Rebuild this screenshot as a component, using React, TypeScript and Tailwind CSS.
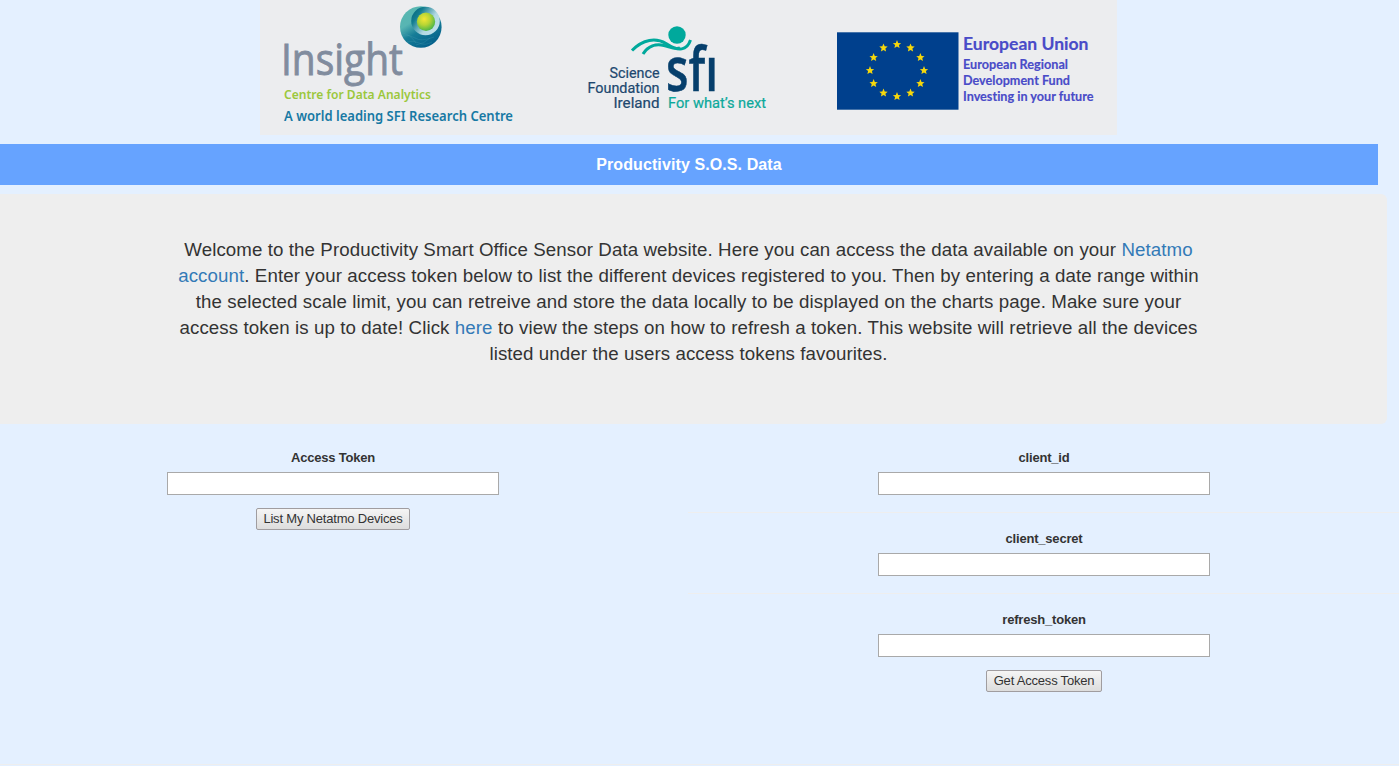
import React from "react";

const stars = Array.from({ length: 12 }, (_, i) => {
  const a = (i * Math.PI) / 6;
  const cx = 60 + 27 * Math.sin(a);
  const cy = 38.5 - 26 * Math.cos(a);
  return Array.from({ length: 10 }, (_, k) => {
    const r = k % 2 === 0 ? 4.4 : 2;
    const t = (k * Math.PI) / 5;
    return `${(cx + r * Math.sin(t)).toFixed(2)},${(cy - r * Math.cos(t)).toFixed(2)}`;
  }).join(" ");
});

function Logos() {
  return (
    <svg className="block h-[135px] w-[857px] bg-[#ecedef]" viewBox="260 0 857 135">
      <defs>
        <linearGradient id="shell" x1="0" y1="0" x2="0.6" y2="1">
          <stop offset="0" stopColor="#58b9b0" />
          <stop offset="0.4" stopColor="#58b5b3" />
          <stop offset="0.65" stopColor="#167d97" />
          <stop offset="1" stopColor="#05628c" />
        </linearGradient>
        <linearGradient id="cavity" x1="0" y1="0" x2="1" y2="0.7">
          <stop offset="0" stopColor="#005f7b" />
          <stop offset="0.3" stopColor="#147e91" />
          <stop offset="0.7" stopColor="#b4d9e3" />
          <stop offset="1" stopColor="#bfe0ea" />
        </linearGradient>
        <radialGradient id="core" cx="0.4" cy="0.35" r="0.65">
          <stop offset="0" stopColor="#f4e735" />
          <stop offset="0.5" stopColor="#b8d534" />
          <stop offset="1" stopColor="#4eb748" />
        </radialGradient>
      </defs>

      <text x="281" y="74.500" textLength="122" lengthAdjust="spacingAndGlyphs" fontFamily="'Open Sans', sans-serif" fontSize="43.500" fill="#818c9e" stroke="#818c9e" strokeWidth="0.9">Insight</text>
      <circle cx="420.8" cy="27" r="20.8" fill="url(#shell)" />
      <circle cx="425.5" cy="21" r="14.3" fill="url(#cavity)" />
      <circle cx="426" cy="21.8" r="9.2" fill="url(#core)" />
      <g fill="none" stroke="#4d9eb5" strokeWidth="0.5" opacity="0.5">
        <path d="M403 36q6-2 12 2t19-1M407 42q6-2 12 1t13-1M402 33q8 1 14 10M430 38q-6 6-14 7" />
      </g>
      <text x="284" y="99" textLength="147" lengthAdjust="spacingAndGlyphs" fontFamily="'Noto Sans', sans-serif" fontWeight="600" fontSize="12" fill="#9bc73c">Centre for Data Analytics</text>
      <text x="284" y="121" textLength="229" lengthAdjust="spacingAndGlyphs" fontFamily="'Noto Sans', sans-serif" fontWeight="600" fontSize="13.500" fill="#1779a4">A world leading SFI Research Centre</text>

      <circle cx="677" cy="35" r="8.7" fill="#00a99c" />
      <g fill="none" stroke="#00a99c" strokeWidth="3">
        <path d="M632 50.5C643 39 656 37.500 666 43.500C679 52 687 50.500 690.500 40" />
        <path d="M643 54C648 46 656 43.500 664 45.500C670 47 675 50 680 48" />
      </g>
      <g fontFamily="Roboto, sans-serif" fontSize="14" fill="#20476e" stroke="#20476e" strokeWidth="0.2">
        <text x="609.5" y="77.500" textLength="50" lengthAdjust="spacingAndGlyphs">Science</text>
        <text x="587.5" y="92.500" textLength="72" lengthAdjust="spacingAndGlyphs">Foundation</text>
        <text x="613.5" y="108" textLength="46" lengthAdjust="spacingAndGlyphs">Ireland</text>
      </g>
      <text x="666" y="91" textLength="52" lengthAdjust="spacingAndGlyphs" fontFamily="'Open Sans', sans-serif" fontWeight="600" fontSize="62" fill="#063f6c" stroke="#063f6c" strokeWidth="0.5">sfı</text>
      <text x="668" y="107.500" textLength="98" lengthAdjust="spacingAndGlyphs" fontFamily="Roboto, sans-serif" fontSize="14" fill="#0ca99b" stroke="#0ca99b" strokeWidth="0.2">For what’s next</text>

      <rect x="837" y="32.300" width="121.500" height="77.400" fill="#00408d" />
      <g transform="translate(837 32)" fill="#f5d70c">
        {stars.map((points) => <polygon key={points} points={points} />)}
      </g>
      <g fontFamily="Lato, sans-serif" fontWeight="700" fill="#494bc8" stroke="#494bc8" strokeWidth="0.15" style={{ fontVariantLigatures: "none" }}>
        <text x="963" y="50" textLength="125.500" lengthAdjust="spacingAndGlyphs" fontSize="16.500">European Union</text>
        <g fontSize="12.500">
          <text x="963" y="68.500" textLength="105" lengthAdjust="spacingAndGlyphs">European Regional</text>
          <text x="963" y="84.500" textLength="107" lengthAdjust="spacingAndGlyphs">Development Fund</text>
          <text x="963" y="101" textLength="130.500" lengthAdjust="spacingAndGlyphs">Investing in your future</text>
        </g>
      </g>
    </svg>
  );
}

function Field({ label }: { label: string }) {
  return (
    <label className="flex w-[332px] flex-col items-center text-[13px] leading-[18px] font-bold tracking-[-0.200px]">
      {label}
      <input className="mt-[5px] h-[23px] w-full border border-[#a9a9a9] bg-white px-1 font-normal" />
    </label>
  );
}

function Button({ children, className }: { children: React.ReactNode; className: string }) {
  return (
    <button className={`h-[22px] rounded-[2px] border border-[#a09da0] bg-linear-to-b from-[#f5f5f5] to-[#dddddd] text-[13px] leading-[18px] tracking-[-0.200px] whitespace-nowrap ${className}`}>
      {children}
    </button>
  );
}

export default function App() {
  return (
    <main className="h-[766px] overflow-hidden bg-[#e4f0ff] font-['Liberation_Sans',Arial,sans-serif] text-[#333333]">
      <header className="ml-[260px] w-[857px]"><Logos /></header>
      <h1 className="mt-[9px] h-[41px] w-[1378px] bg-[#66a3ff] text-center text-base leading-[41px] font-bold tracking-[0.100px] text-white">Productivity S.O.S. Data</h1>
      <section className="mt-[9px] h-[230px] w-[1387px] rounded-r-[6px] bg-[#eeeeee] pt-[43px]">
        <p className="ml-[138.500px] w-[1100px] text-center text-[18.700px] leading-[26px] tracking-[0.094px] whitespace-nowrap">
          Welcome to the Productivity Smart Office Sensor Data website. Here you can access the data available on your <a className="text-[#337ab7]" href="#netatmo">Netatmo</a><br />
          <a className="text-[#337ab7]" href="#netatmo">account</a>. Enter your access token below to list the different devices registered to you. Then by entering a date range within<br />
          the selected scale limit, you can retreive and store the data locally to be displayed on the charts page. Make sure your<br />
          access token is up to date! Click <a className="text-[#337ab7]" href="#refresh">here</a> to view the steps on how to refresh a token. This website will retrieve all the devices<br />
          listed under the users access tokens favourites.
        </p>
      </section>
      <div className="flex">
        <form className="flex w-[688px] flex-col pt-[25px] pl-[167px]">
          <Field label="Access Token" />
          <Button className="mt-[13px] ml-[89px] w-[154px]">List My Netatmo Devices</Button>
        </form>
        <form className="flex w-[711px] flex-col pt-[25px]">
          <div className="pl-[190px]"><Field label="client_id" /></div>
          <hr className="mt-[17px] mb-[17px] border-[#eeeeee]" />
          <div className="pl-[190px]"><Field label="client_secret" /></div>
          <hr className="mt-[17px] mb-[17px] border-[#eeeeee]" />
          <div className="pl-[190px]"><Field label="refresh_token" /></div>
          <Button className="mt-[13px] ml-[298px] w-[116px]">Get Access Token</Button>
        </form>
      </div>
      <hr className="mt-[72px] border-[#eeeeee]" />
    </main>
  );
}
